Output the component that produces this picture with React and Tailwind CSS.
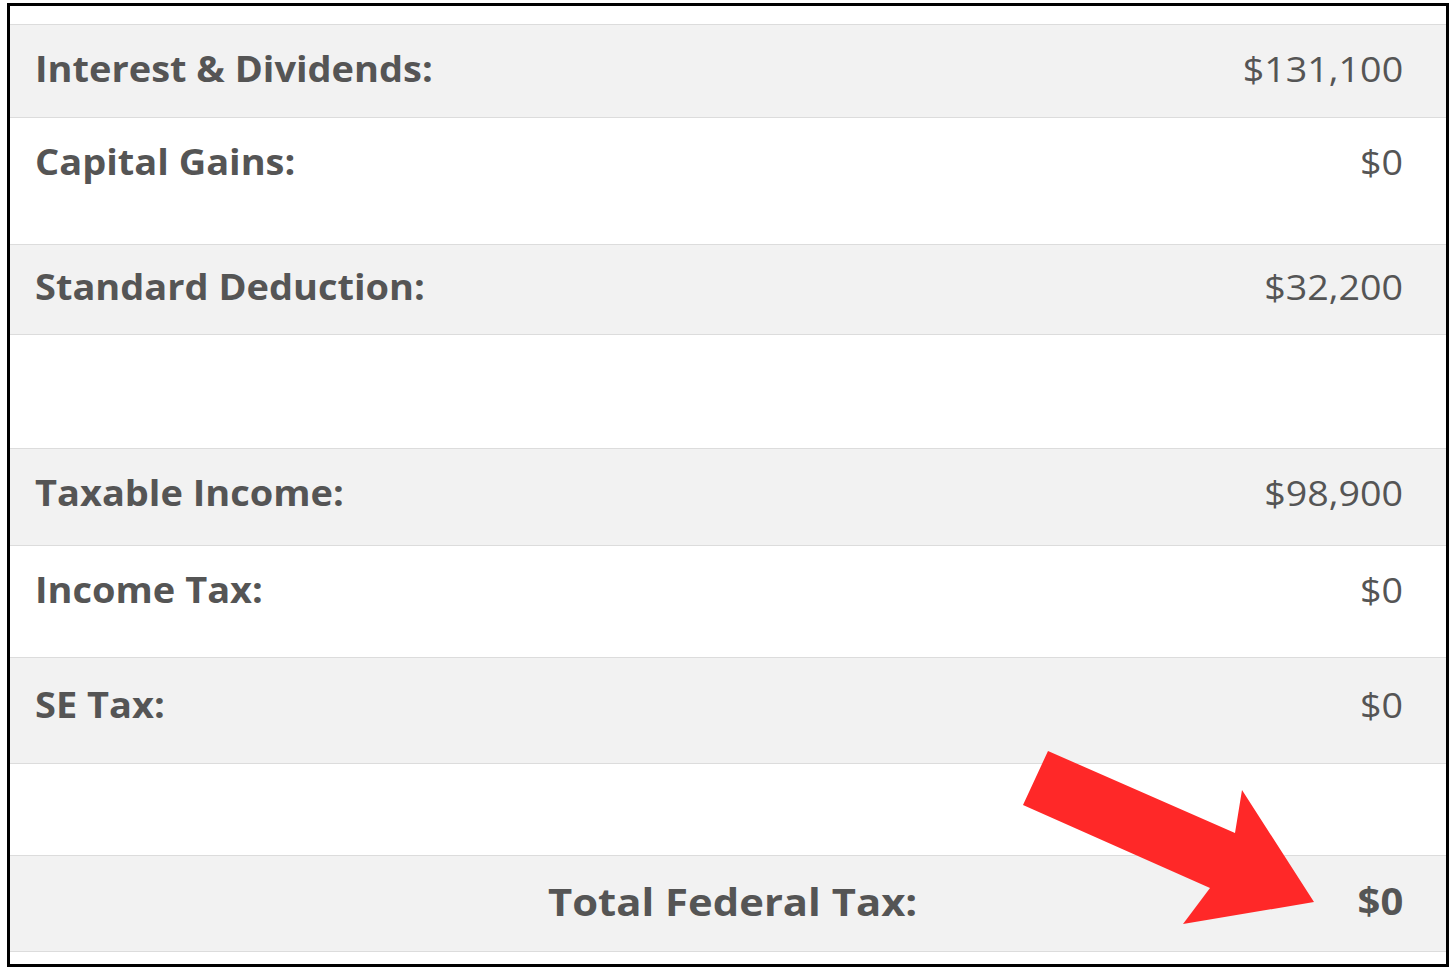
import React from 'react';

const rows = [
  { label: 'Interest & Dividends:', value: '$131,100', bg: 'bg-[#f2f2f2]', h: 'h-[93px]', pt: 'pt-[20px]' },
  { label: 'Capital Gains:', value: '$0', bg: 'bg-white', h: 'h-[127px]', pt: 'pt-[20px]' },
  { label: 'Standard Deduction:', value: '$32,200', bg: 'bg-[#f2f2f2]', h: 'h-[90px]', pt: 'pt-[18px]' },
  { label: '', value: '', bg: 'bg-white', h: 'h-[114px]', pt: 'pt-[20px]' },
  { label: 'Taxable Income:', value: '$98,900', bg: 'bg-[#f2f2f2]', h: 'h-[97px]', pt: 'pt-[20px]' },
  { label: 'Income Tax:', value: '$0', bg: 'bg-white', h: 'h-[112px]', pt: 'pt-[20px]' },
  { label: 'SE Tax:', value: '$0', bg: 'bg-[#f2f2f2]', h: 'h-[106px]', pt: 'pt-[23px]' },
  { label: '', value: '', bg: 'bg-white', h: 'h-[92px]', pt: 'pt-[20px]' },
];

const Arrow = () => (
  <svg className="absolute left-0 top-0 pointer-events-none" width="1456" height="971" viewBox="0 0 1456 971">
    <polygon
      points="1048,748 1235,830 1242,787 1314,899 1183,921 1210,885 1023,802"
      fill="#ff2828"
    />
  </svg>
);

export default function App() {
  return (
    <div className="relative w-[1456px] h-[971px] bg-white font-['Open_Sans',_'Liberation_Sans',_sans-serif] text-[#555555]">
      <div className="ml-[7px] mt-[3px] w-[1442px] h-[964px] border-[3px] border-black flex flex-col overflow-hidden">
        <div className="h-[19px] bg-white border-b border-[#dcdcdc] shrink-0" />
        {rows.map((r, i) => (
          <div
            key={i}
            className={`${r.bg} ${r.h} ${r.pt} shrink-0 border-b border-[#dcdcdc] flex justify-between pl-[25px] pr-[43px] text-[35px] leading-[48px]`}
          >
            <span className="font-bold origin-left scale-x-[1.085]">{r.label}</span>
            <span className="font-normal origin-right scale-x-[1.075]">{r.value}</span>
          </div>
        ))}
        <div className="bg-[#f2f2f2] h-[96px] pt-[21px] shrink-0 border-b border-[#dcdcdc] flex pr-[43px] leading-[48px] font-bold">
          <span className="ml-[538px] text-[38px] origin-left scale-x-[1.1]">Total Federal Tax:</span>
          <span className="ml-auto text-[37px] origin-right scale-x-[1.08]">$0</span>
        </div>
        <div className="flex-1 bg-white" />
      </div>
      <Arrow />
    </div>
  );
}
